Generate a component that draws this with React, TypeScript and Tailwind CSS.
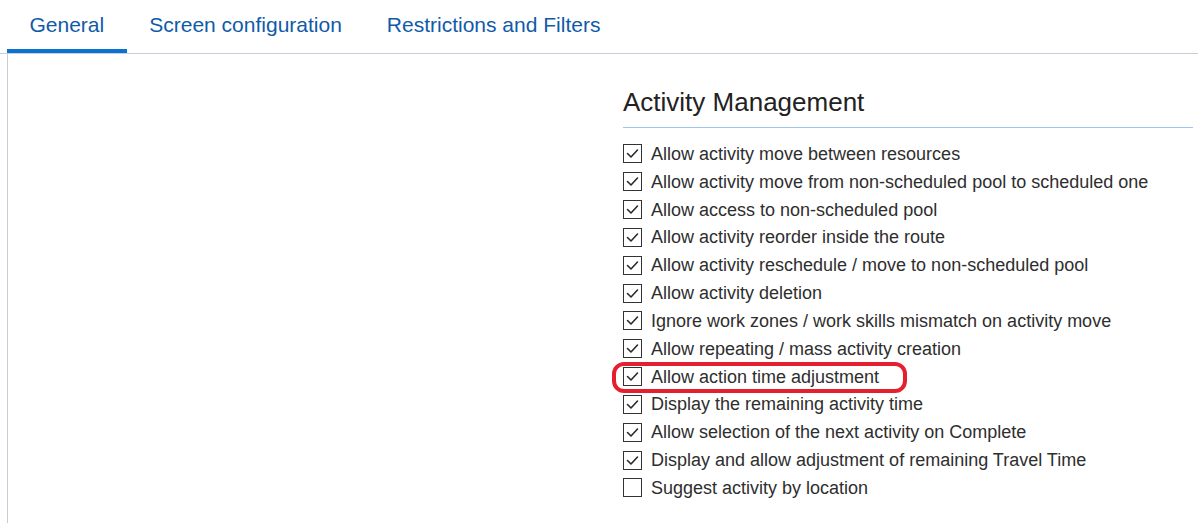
import React from "react";

const items: { label: string; checked: boolean; highlight?: boolean }[] = [
  { label: "Allow activity move between resources", checked: true },
  { label: "Allow activity move from non-scheduled pool to scheduled one", checked: true },
  { label: "Allow access to non-scheduled pool", checked: true },
  { label: "Allow activity reorder inside the route", checked: true },
  { label: "Allow activity reschedule / move to non-scheduled pool", checked: true },
  { label: "Allow activity deletion", checked: true },
  { label: "Ignore work zones / work skills mismatch on activity move", checked: true },
  { label: "Allow repeating / mass activity creation", checked: true },
  { label: "Allow action time adjustment", checked: true, highlight: true },
  { label: "Display the remaining activity time", checked: true },
  { label: "Allow selection of the next activity on Complete", checked: true },
  { label: "Display and allow adjustment of remaining Travel Time", checked: true },
  { label: "Suggest activity by location", checked: false },
];

function CheckBox({ checked }: { checked: boolean }) {
  return (
    <span className="flex h-[19px] w-[19px] shrink-0 items-center justify-center border border-[#333333] bg-white">
      {checked && (
        <svg width="17" height="17" viewBox="0 0 17 17" fill="none">
          <path d="M3.5 8.5 L7 12 L13.5 5" stroke="#2a2a2a" strokeWidth="1.6" strokeLinecap="round" strokeLinejoin="round" />
        </svg>
      )}
    </span>
  );
}

export default function App() {
  const tabs = ["General", "Screen configuration", "Restrictions and Filters"];
  return (
    <div className="h-[523px] w-[1198px] overflow-hidden bg-white font-['Liberation_Sans',Arial,sans-serif]">
      <div className="flex h-[54px] border-b border-[#c6ced8] pl-[7px]">
        {tabs.map((t, i) => (
          <div
            key={t}
            className={
              i === 0
                ? "flex h-[53px] items-center border-b-4 border-[#0a72cf] px-[22.5px] text-[21px] text-[#0f5ba9]"
                : "flex h-[53px] items-center border-b-4 border-transparent px-[22.5px] text-[21px] text-[#0f5ba9]"
            }
          >
            {t}
          </div>
        ))}
      </div>
      <div className="ml-[7px] grid h-[469px] grid-cols-2 border-l border-[#c6ced8]">
        <div />
        <div className="pl-[20px] pr-[5px] pt-[32px]">
          <div className="border-b border-[#9fc4ee] pb-[9px] text-[26px] leading-[32px] text-[#222222]">
            Activity Management
          </div>
          <div className="mt-[12px] flex flex-col">
            {items.map((it) => (
              <div key={it.label} className="relative flex h-[27.83px] items-center gap-[9px]">
                <CheckBox checked={it.checked} />
                <span className="whitespace-nowrap text-[18px] leading-[20px] text-[#2e2e2e]">{it.label}</span>
                {it.highlight && (
                  <div className="pointer-events-none absolute left-[-11px] top-[-1px] h-[31px] w-[295px] rounded-[12px] border-[4.5px] border-[#e5202e]" />
                )}
              </div>
            ))}
          </div>
        </div>
      </div>
    </div>
  );
}
